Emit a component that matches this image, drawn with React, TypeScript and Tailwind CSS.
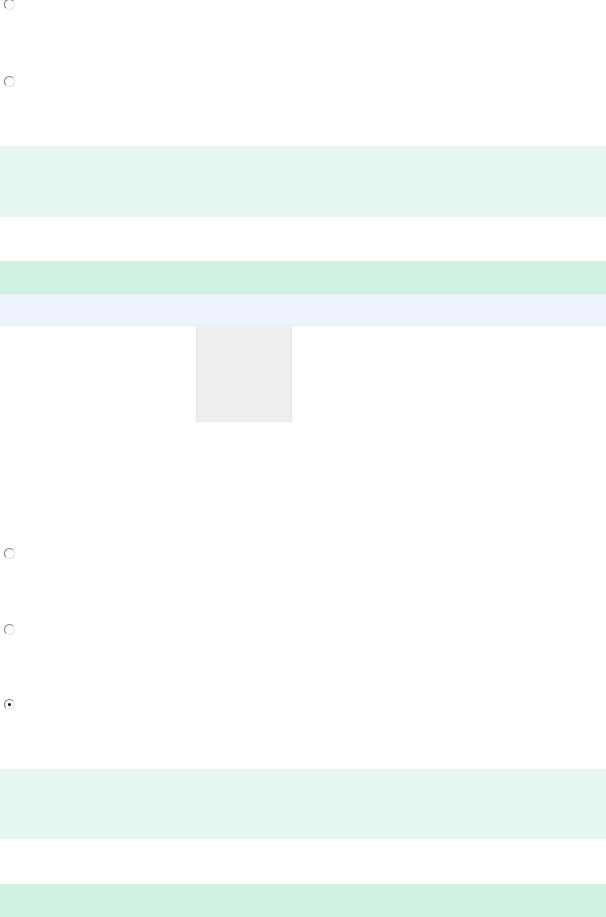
function Radio({ checked = false }: { checked?: boolean }) {
  return (
    <span className="relative ml-[4px] block h-[11px] w-[11px] rounded-full border border-b-[#e4e4e4] border-l-[#7a7a7a] border-r-[#e4e4e4] border-t-[#7a7a7a] bg-white">
      {checked && (
        <span className="absolute left-[3px] top-[3px] h-[3px] w-[3px] rounded-full bg-black" />
      )}
    </span>
  );
}

function RadioRow({ height, checked }: { height: string; checked?: boolean }) {
  return (
    <div className={`shrink-0 ${height}`}>
      <Radio checked={checked} />
    </div>
  );
}

export default function App() {
  return (
    <div className="flex h-[917px] w-[606px] flex-col overflow-hidden bg-white font-['Liberation_Sans',sans-serif]">
      <div className="-mt-[1px] shrink-0">
        <RadioRow height="h-[77px]" />
        <RadioRow height="h-[70px]" />
      </div>
      <div className="h-[71px] shrink-0 bg-[#e6f7ef]" />
      <div className="h-[44px] shrink-0 bg-white" />
      <div className="h-[33px] shrink-0 border-y border-[#d3ede2] bg-[#cff2e3]" />
      <div className="h-[32px] shrink-0 border-b border-[#e8ecf6] bg-[#eef3fd]" />
      <div className="flex h-[222px] shrink-0 flex-col">
        <div className="ml-[196px] h-[96px] w-[96px] border border-t-0 border-[#e6e6e6] bg-[#efefef]" />
      </div>
      <RadioRow height="h-[76px]" />
      <RadioRow height="h-[75px]" />
      <RadioRow height="h-[70px]" checked />
      <div className="h-[70px] shrink-0 bg-[#e6f7ef]" />
      <div className="h-[45px] shrink-0 bg-white" />
      <div className="h-[40px] shrink-0 border-t border-[#d8eee4] bg-[#cff2e3]" />
    </div>
  );
}
